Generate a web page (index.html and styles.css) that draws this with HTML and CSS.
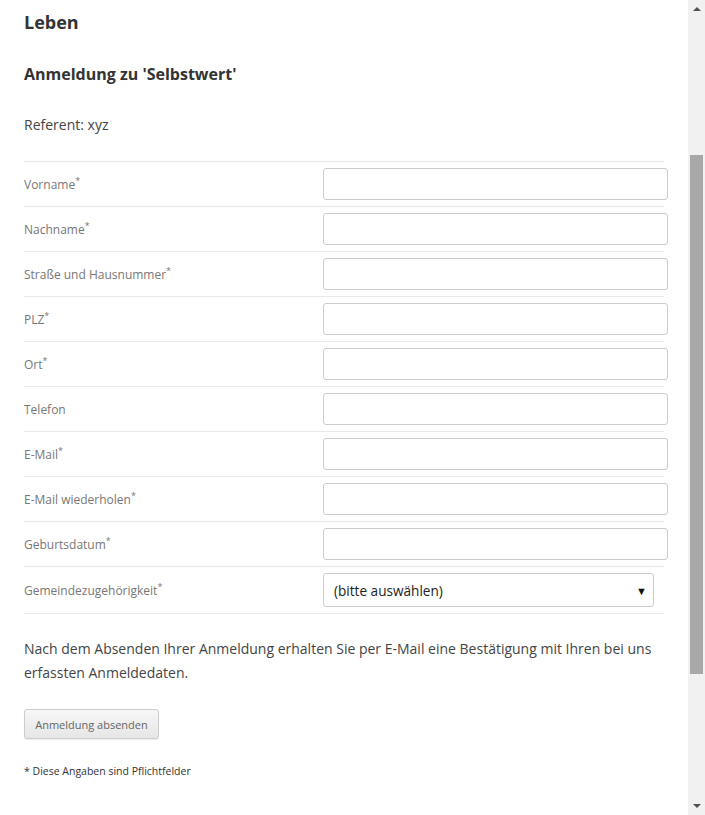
FILE: index.html
```html
<!DOCTYPE html>
<html lang="de">
<head>
<meta charset="utf-8">
<title>Anmeldung</title>
<link rel="stylesheet" href="styles.css">
</head>
<body>
<main class="page">
  <h1 class="title">Leben</h1>
  <h2 class="subtitle">Anmeldung zu 'Selbstwert'</h2>
  <p class="referent">Referent: xyz</p>
  <form class="form">
    <div class="row"><label class="label">Vorname<sup>*</sup></label><input class="field" type="text"></div>
    <div class="row"><label class="label">Nachname<sup>*</sup></label><input class="field" type="text"></div>
    <div class="row"><label class="label">Straße und Hausnummer<sup>*</sup></label><input class="field" type="text"></div>
    <div class="row"><label class="label">PLZ<sup>*</sup></label><input class="field" type="text"></div>
    <div class="row"><label class="label">Ort<sup>*</sup></label><input class="field" type="text"></div>
    <div class="row"><label class="label">Telefon</label><input class="field" type="text"></div>
    <div class="row"><label class="label">E-Mail<sup>*</sup></label><input class="field" type="text"></div>
    <div class="row"><label class="label">E-Mail wiederholen<sup>*</sup></label><input class="field" type="text"></div>
    <div class="row"><label class="label">Geburtsdatum<sup>*</sup></label><input class="field" type="text"></div>
    <div class="row row-last"><label class="label">Gemeindezugehörigkeit<sup>*</sup></label>
      <div class="select"><span>(bitte auswählen)</span><span class="caret">▼</span></div>
    </div>
  </form>
  <p class="note">Nach dem Absenden Ihrer Anmeldung erhalten Sie per E-Mail eine Bestätigung mit Ihren bei uns erfassten Anmeldedaten.</p>
  <button class="submit" type="button">Anmeldung absenden</button>
  <p class="footnote">* Diese Angaben sind Pflichtfelder</p>
</main>
<div class="scrollbar">
  <span class="arrow arrow-up"></span>
  <span class="thumb"></span>
  <span class="arrow arrow-down"></span>
</div>
</body>
</html>
```
FILE: styles.css
```css
html, body {
  margin: 0;
  padding: 0;
  background: #fff;
}
body {
  font-family: "Open Sans", "Noto Sans", sans-serif;
  color: #333;
}
.page {
  width: 640px;
  padding: 10px 0 0 24px;
}
.title {
  margin: 0;
  font-size: 18px;
  line-height: 24px;
  font-weight: 700;
  color: #333;
}
.subtitle {
  margin: 29px 0 0;
  font-size: 16px;
  line-height: 22px;
  font-weight: 700;
  color: #333;
}
.referent {
  margin: 30px 0 0;
  font-size: 14px;
  line-height: 20px;
  color: #444;
}
.form {
  margin-top: 26px;
}
.row {
  display: grid;
  grid-template-columns: 299px 345px;
  align-items: center;
  border-top: 1px solid #e8e8e8;
  padding: 6px 0;
}
.row-last {
  border-bottom: 1px solid #e8e8e8;
}
.label {
  font-size: 12px;
  color: #777;
}
.label sup {
  font-size: 9px;
  line-height: 0;
  vertical-align: 5px;
}
.field {
  box-sizing: border-box;
  width: 345px;
  height: 32px;
  margin: 0;
  border: 1px solid #ccc;
  border-radius: 3px;
  background: #fff;
}
.select {
  box-sizing: border-box;
  width: 331px;
  height: 34px;
  border: 1px solid #ccc;
  border-radius: 3px;
  display: flex;
  align-items: center;
  justify-content: space-between;
  padding: 0 6px 0 10px;
  font-size: 13.6px;
  color: #222;
}
.caret {
  font-size: 11px;
  color: #111;
}
.note {
  margin: 23px 0 0;
  font-size: 14px;
  line-height: 24px;
  color: #444;
}
.submit {
  margin-top: 24px;
  box-sizing: border-box;
  width: 135px;
  height: 30px;
  padding: 0;
  font-family: "Open Sans", "Noto Sans", sans-serif;
  font-size: 11px;
  color: #666;
  background: linear-gradient(#f7f7f7, #e6e6e6);
  border: 1px solid #ccc;
  border-radius: 3px;
  box-shadow: 0 1px 1px rgba(0,0,0,0.08);
}
.footnote {
  margin: 24px 0 0;
  font-size: 10.5px;
  line-height: 16px;
  color: #333;
}
.scrollbar {
  position: fixed;
  top: 0;
  right: 0;
  width: 17px;
  height: 815px;
  background: #f1f1f1;
}
.thumb {
  position: absolute;
  left: 2px;
  top: 155px;
  width: 13px;
  height: 519px;
  background: #a8a8a8;
}
.arrow {
  position: absolute;
  left: 5px;
  width: 0;
  height: 0;
  border-left: 4px solid transparent;
  border-right: 4px solid transparent;
}
.arrow-up {
  top: 7px;
  border-bottom: 4px solid #505050;
}
.arrow-down {
  top: 804px;
  border-top: 4px solid #505050;
}
```
